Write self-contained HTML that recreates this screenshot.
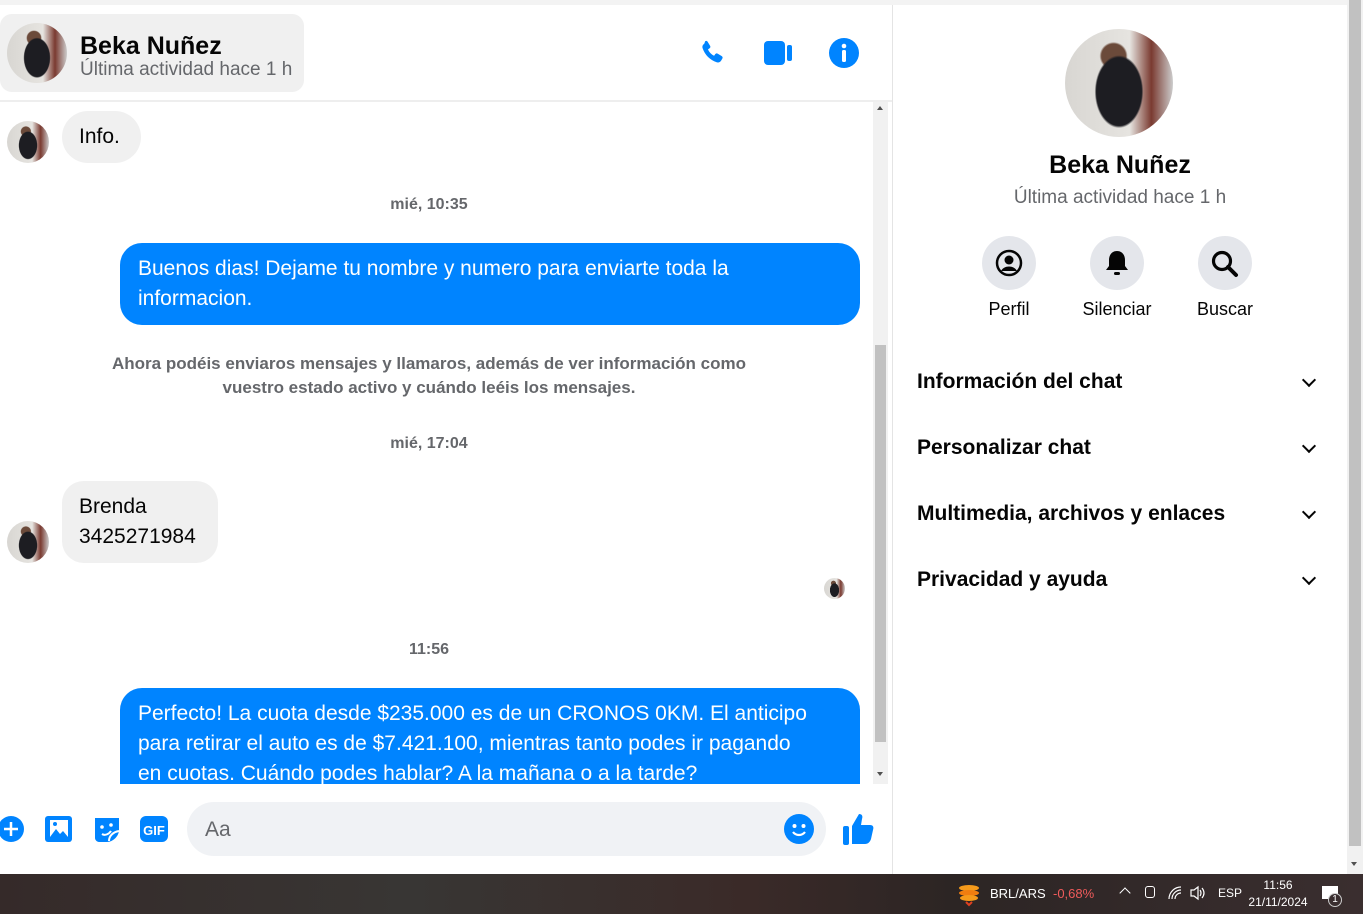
<!DOCTYPE html>
<html><head><meta charset="utf-8"><style>
*{box-sizing:border-box;margin:0;padding:0}
body{width:1363px;height:914px;overflow:hidden;background:#fff;font-family:"Liberation Sans",sans-serif;position:relative;color:#050505}
.abs{position:absolute}
.av{position:absolute;border-radius:50%;background:radial-gradient(ellipse 30% 45% at 50% 58%,#1d1d22 0 70%,transparent 75%),radial-gradient(circle at 45% 25%,#6b4a3a 0 12%,transparent 14%),linear-gradient(90deg,#d8d6d2,#e6e4e0 60%,#7a3a30 80%,#ccc);}
.bub{position:absolute;border-radius:22px}
.grey{background:#f0f0f0}
.blue{background:#0084ff;color:#fff;font-size:21px;line-height:30px;padding:10px 18px}
.ts{position:absolute;width:858px;text-align:center;font-size:16px;color:#65676b;font-weight:bold}
.acc{position:absolute;left:917px;font-size:21px;font-weight:bold;color:#050505}
.chev{position:absolute;left:1304px;width:10px;height:10px;border-right:2.5px solid #050505;border-bottom:2.5px solid #050505;transform:rotate(45deg)}
.cb{position:absolute;width:54px;height:54px;border-radius:50%;background:#e4e6eb}
.cl{position:absolute;font-size:18px;width:100px;text-align:center}
</style></head><body>
<div class="abs" style="left:0;top:0;width:1347px;height:5px;background:#f3f3f3"></div>
<div class="abs" style="left:0;top:14px;width:304px;height:78px;background:#f0f0f0;border-radius:12px"></div>
<div class="av" style="left:7px;top:23px;width:60px;height:60px"></div>
<div class="abs" style="left:80px;top:31px;font-size:25px;font-weight:bold;line-height:30px">Beka Nuñez</div>
<div class="abs" style="left:80px;top:59px;font-size:19px;color:#65676b">Última actividad hace 1 h</div>
<div class="abs" style="left:0;top:100px;width:892px;height:2px;background:#eee"></div>
<div class="abs" style="left:892px;top:5px;width:1px;height:869px;background:#e4e4e4"></div>
<svg class="abs" style="left:696px;top:38px" width="32" height="30" viewBox="0 0 24 24"><path fill="#0084ff" d="M6.6 2.5c.7-.4 1.5-.2 1.9.5l2 3.3c.4.7.2 1.5-.4 1.9l-1.3.9c.9 2.2 2.7 4.1 4.9 5.1l.9-1.3c.4-.6 1.3-.8 1.9-.4l3.3 2c.7.4.9 1.3.5 1.9l-1 1.7c-.7 1.2-2.2 1.800-3.6 1.3C10.3 17.5 6.3 13.5 4.5 8.2c-.5-1.4.1-2.9 1.3-3.6z"/></svg>
<svg class="abs" style="left:763px;top:40px" width="32" height="26" viewBox="0 0 32 26"><rect x="1" y="1" width="21" height="24" rx="4" fill="#0084ff"/><rect x="24" y="5" width="5" height="16" rx="2" fill="#0084ff"/></svg>
<svg class="abs" style="left:828px;top:37px" width="32" height="32" viewBox="0 0 32 32"><circle cx="16" cy="16" r="15" fill="#0084ff"/><circle cx="16" cy="9" r="2.3" fill="#fff"/><rect x="14" y="13" width="4" height="12" rx="1.5" fill="#fff"/></svg>
<div class="abs" style="left:873px;top:102px;width:15px;height:682px;background:#f1f1f1"></div>
<div class="abs" style="left:875px;top:345px;width:11px;height:397px;background:#c1c1c1"></div>
<div class="abs" style="left:877px;top:106px;border:3.5px solid transparent;border-bottom:4px solid #505050;border-top:0"></div>
<div class="abs" style="left:877px;top:772px;border:3.5px solid transparent;border-top:4px solid #505050;border-bottom:0"></div>
<div class="av" style="left:7px;top:121px;width:42px;height:42px"></div>
<div class="bub grey" style="left:62px;top:111px;width:79px;height:52px;border-radius:26px;font-size:21px;padding:14px 17px">Info.</div>
<div class="ts" style="top:196px">mié, 10:35</div>
<div class="bub blue" style="left:120px;top:243px;width:740px;height:82px;padding-top:11px">Buenos dias! Dejame tu nombre y numero para enviarte toda la informacion.</div>
<div class="abs" style="left:0;top:352px;width:858px;text-align:center;font-size:17px;line-height:24px;color:#65676b;font-weight:bold">Ahora podéis enviaros mensajes y llamaros, además de ver información como<br>vuestro estado activo y cuándo leéis los mensajes.</div>
<div class="ts" style="top:435px">mié, 17:04</div>
<div class="bub grey" style="left:62px;top:481px;width:156px;height:82px;font-size:21px;line-height:30px;padding:11px 17px">Brenda<br>3425271984</div>
<div class="av" style="left:7px;top:521px;width:42px;height:42px"></div>
<div class="av" style="left:824px;top:578px;width:21px;height:21px"></div>
<div class="ts" style="top:641px">11:56</div>
<div class="abs" style="left:0;top:102px;width:873px;height:682px;overflow:hidden;pointer-events:none">
<div class="bub blue" style="left:120px;top:586px;width:740px;height:120px;padding-top:11px">Perfecto! La cuota desde $235.000 es de un CRONOS 0KM. El anticipo<br>para retirar el auto es de $7.421.100, mientras tanto podes ir pagando<br>en cuotas. Cuándo podes hablar? A la mañana o a la tarde?</div>
</div>
<svg class="abs" style="left:0;top:815px" width="26" height="28" viewBox="0 0 26 28"><circle cx="11" cy="14" r="13" fill="#0084ff"/><path d="M11 7v14M4 14h14" stroke="#fff" stroke-width="2.5"/></svg>
<svg class="abs" style="left:44px;top:814px" width="30" height="30" viewBox="0 0 30 30"><rect x="1" y="2" width="27" height="26" rx="3" fill="#0084ff"/><rect x="6" y="6" width="18" height="17" fill="#fff"/><path d="M6 23l6-8 4 5 3-3 5 6z" fill="#0084ff"/><circle cx="11" cy="10" r="2" fill="#0084ff"/></svg>
<svg class="abs" style="left:92px;top:814px" width="30" height="30" viewBox="0 0 30 30"><path d="M3 4h24v12c0 6-6 12-12 12H7c-2 0-4-2-4-4z" fill="#0084ff"/><circle cx="10" cy="13" r="1.8" fill="#fff"/><circle cx="19" cy="11" r="1.8" fill="#fff"/><path d="M10 20c3 2 7 0 9-3M17 27c0-5 4-9 10-10" stroke="#fff" stroke-width="2" fill="none"/></svg>
<svg class="abs" style="left:139px;top:815px" width="30" height="28" viewBox="0 0 30 28"><rect x="1" y="1" width="28" height="26" rx="6" fill="#0084ff"/><text x="15" y="20" font-size="13" font-weight="bold" fill="#fff" text-anchor="middle" font-family="Liberation Sans">GIF</text></svg>
<div class="abs" style="left:187px;top:802px;width:639px;height:54px;border-radius:27px;background:#f0f2f5"></div>
<div class="abs" style="left:205px;top:818px;font-size:21px;color:#65676b">Aa</div>
<svg class="abs" style="left:784px;top:814px" width="30" height="30" viewBox="0 0 30 30"><circle cx="15" cy="15" r="15" fill="#0084ff"/><circle cx="10.5" cy="12" r="2" fill="#fff"/><circle cx="19.5" cy="12" r="2" fill="#fff"/><path d="M9 18c3 4 9 4 12 0" stroke="#fff" stroke-width="2.2" fill="none"/></svg>
<svg class="abs" style="left:842px;top:812px" width="34" height="34" viewBox="0 0 34 34"><rect x="1" y="14" width="6" height="19" rx="2" fill="#0084ff"/><path d="M10 14l7-12c3 0 4 2 3 5l-1 6h9c3 0 4 2 3 5l-2 9c-1 3-3 5-6 5H10z" fill="#0084ff"/></svg>
<div class="av" style="left:1065px;top:29px;width:108px;height:108px"></div>
<div class="abs" style="left:900px;top:151px;width:440px;text-align:center;font-size:25px;font-weight:bold">Beka Nuñez</div>
<div class="abs" style="left:900px;top:187px;width:440px;text-align:center;font-size:19px;color:#65676b">Última actividad hace 1 h</div>
<div class="cb" style="left:982px;top:236px"></div>
<div class="cb" style="left:1090px;top:236px"></div>
<div class="cb" style="left:1198px;top:236px"></div>
<svg class="abs" style="left:995px;top:249px" width="28" height="28" viewBox="0 0 28 28"><circle cx="14" cy="14" r="12" fill="none" stroke="#050505" stroke-width="2.5"/><circle cx="14" cy="11" r="4.5" fill="#050505"/><path d="M6 22c3-6 13-6 16 0" fill="#050505"/></svg>
<svg class="abs" style="left:1104px;top:249px" width="26" height="28" viewBox="0 0 26 28"><path d="M13 2c5 0 8 4 8 9v6l3 4H2l3-4v-6c0-5 3-9 8-9z" fill="#050505"/><rect x="10" y="23" width="6" height="3" rx="1.5" fill="#050505"/></svg>
<svg class="abs" style="left:1210px;top:249px" width="30" height="30" viewBox="0 0 30 30"><circle cx="12" cy="12" r="8.5" fill="none" stroke="#050505" stroke-width="3.2"/><path d="M18 18l8 8" stroke="#050505" stroke-width="4" stroke-linecap="round"/></svg>
<div class="cl" style="left:959px;top:299px">Perfil</div>
<div class="cl" style="left:1067px;top:299px">Silenciar</div>
<div class="cl" style="left:1175px;top:299px">Buscar</div>
<div class="acc" style="top:370px">Información del chat</div><div class="chev" style="top:375px"></div>
<div class="acc" style="top:436px">Personalizar chat</div><div class="chev" style="top:441px"></div>
<div class="acc" style="top:502px">Multimedia, archivos y enlaces</div><div class="chev" style="top:507px"></div>
<div class="acc" style="top:568px">Privacidad y ayuda</div><div class="chev" style="top:573px"></div>
<div class="abs" style="left:1347px;top:0;width:16px;height:874px;background:#f1f1f1"></div>
<div class="abs" style="left:1349px;top:0;width:12px;height:846px;background:#c1c1c1"></div>
<div class="abs" style="left:1351px;top:862px;border:3.5px solid transparent;border-top:4px solid #505050;border-bottom:0"></div>
<div class="abs" style="left:0;top:874px;width:1363px;height:40px;background:linear-gradient(90deg,#352a29,#383634 30%,#3a2a28 55%,#2c2524 70%,#3a2e2f)"></div>
<svg class="abs" style="left:957px;top:882px" width="26" height="26" viewBox="0 0 26 26"><ellipse cx="12" cy="6" rx="10" ry="3" fill="#f59a1b"/><ellipse cx="12" cy="11" rx="10" ry="3" fill="#f07d10"/><ellipse cx="12" cy="16" rx="9" ry="3" fill="#f59a1b"/><path d="M9 20l3 3 3-3" stroke="#e04020" stroke-width="2" fill="none"/></svg>
<div class="abs" style="left:990px;top:886px;font-size:13px;color:#fff">BRL/ARS</div>
<div class="abs" style="left:1053px;top:886px;font-size:13px;color:#ef5b5b">-0,68%</div>
<div class="abs" style="left:1121px;top:889px;width:8px;height:8px;border-left:1.5px solid #fff;border-top:1.5px solid #fff;transform:rotate(45deg)"></div>
<div class="abs" style="left:1145px;top:886px;width:10px;height:12px;border:1.3px solid #fff;border-radius:3px"></div>
<svg class="abs" style="left:1167px;top:885px" width="16" height="16" viewBox="0 0 16 16"><path d="M2 14a12 12 0 0 1 12-12M5 14a9 9 0 0 1 9-9M8 14a6 6 0 0 1 6-6" stroke="#fff" fill="none" stroke-width="1.2"/></svg>
<svg class="abs" style="left:1189px;top:885px" width="18" height="16" viewBox="0 0 18 16"><path d="M2 5h3l4-3v12l-4-3H2z" stroke="#fff" fill="none" stroke-width="1.2"/><path d="M11 5q2 3 0 6M13 3q4 5 0 10" stroke="#fff" fill="none" stroke-width="1.2"/></svg>
<div class="abs" style="left:1218px;top:886px;font-size:12px;color:#fff">ESP</div>
<div class="abs" style="left:1245px;top:877px;width:66px;text-align:center;font-size:12px;color:#fff;line-height:17px">11:56<br>21/11/2024</div>
<div class="abs" style="left:1322px;top:886px;width:16px;height:13px;background:#fff"></div>
<div class="abs" style="left:1328px;top:893px;width:14px;height:14px;border-radius:50%;border:1px solid #ccc;background:#3a2e2f;color:#fff;font-size:10px;text-align:center;line-height:12px">1</div>
</body></html>
